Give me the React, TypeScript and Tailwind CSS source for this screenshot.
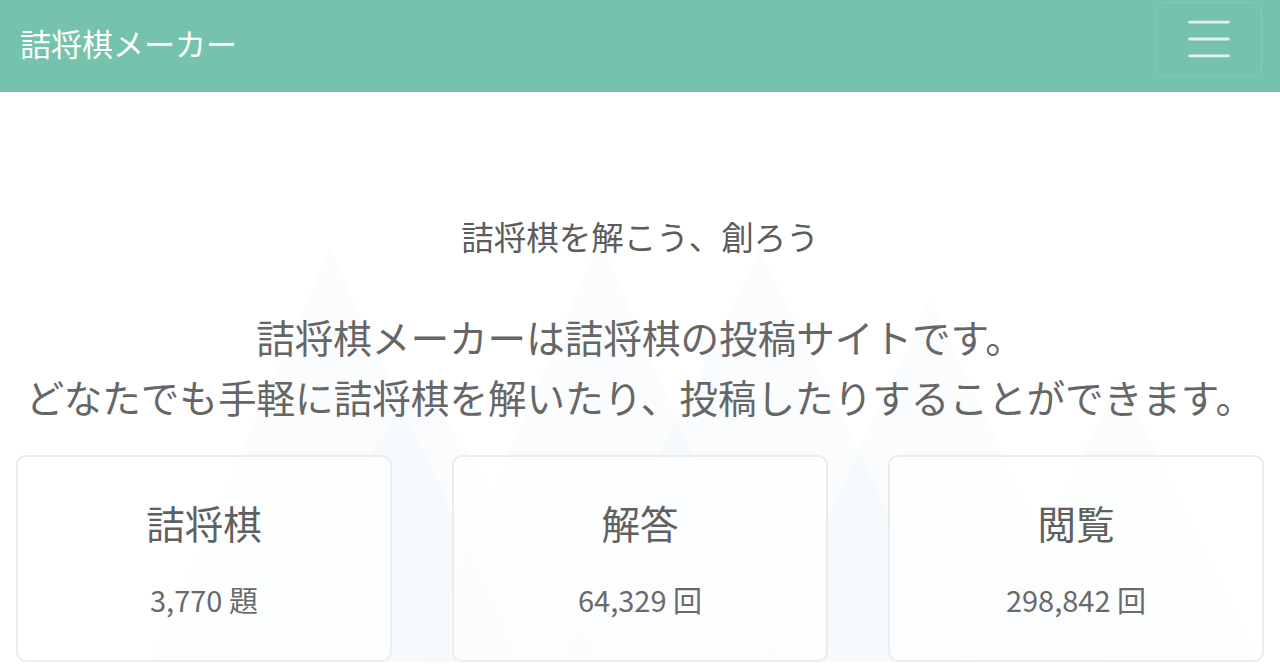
import { Menu } from 'lucide-react';

const jp = { fontFamily: '"Noto Sans CJK JP", "Noto Sans", sans-serif' };

const stats = [
  { label: '詰将棋', value: '3,770 題' },
  { label: '解答', value: '64,329 回' },
  { label: '閲覧', value: '298,842 回' },
];

// 背景のうっすらした三角形の山
function Mountains() {
  const tris = [
    [150, 668, 330, 250, 520],
    [420, 668, 600, 240, 780],
    [560, 668, 760, 250, 960],
    [760, 668, 930, 300, 1100],
    [980, 668, 1120, 380, 1260],
    [240, 668, 420, 380, 600],
  ];
  return (
    <svg className="pointer-events-none absolute inset-0 h-full w-full" viewBox="0 0 1280 576" preserveAspectRatio="none">
      {tris.map(([x1, y1, x2, y2, x3], i) => (
        <polygon key={i} points={`${x1},${y1 - 92} ${x2},${y2 - 92} ${x3},${y1 - 92}`} fill="#f3f7f9" fillOpacity="0.4" />
      ))}
    </svg>
  );
}

export default function App() {
  return (
    <div className="min-h-screen bg-white text-[#5a5a5a]" style={jp}>
      <nav className="flex h-[92px] items-center justify-between bg-[#76c3ad] pl-5 pr-[18px]">
        <a className="pb-2 text-[31px] leading-none text-white">詰将棋メーカー</a>
        <button className="mb-[14px] flex h-[75px] w-[107px] items-center justify-center rounded-[10px] border border-white/10">
          <Menu className="h-[58px] w-[58px] text-[#e6efec]" strokeWidth={1.2} />
        </button>
      </nav>

      <main className="relative">
        <Mountains />
        <div className="relative px-4">
          <h1 className="pt-[120px] text-center text-[32.5px] leading-[48px] text-[#5c5c5c]">詰将棋を解こう、創ろう</h1>
          <p className="mt-[46px] text-center text-[38.6px] leading-[60px] text-[#666]">
            詰将棋メーカーは詰将棋の投稿サイトです。
            <br />
            どなたでも手軽に詰将棋を解いたり、投稿したりすることができます。
          </p>
          <div className="mt-[29px] grid grid-cols-3 gap-[60px]">
            {stats.map((s) => (
              <div key={s.label} className="flex h-[207px] flex-col items-center rounded-[10px] border-2 border-[#ececec] bg-white/60">
                <div className="mt-[38px] text-[38.5px] leading-[54px] text-[#606060]">{s.label}</div>
                <div className="mt-[30px] text-[29px] leading-[40px] text-[#6a6a6a]">{s.value}</div>
              </div>
            ))}
          </div>
        </div>
      </main>
    </div>
  );
}
